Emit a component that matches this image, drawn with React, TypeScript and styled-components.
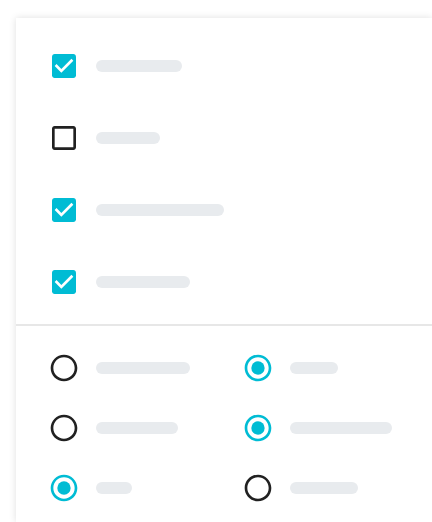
import React from "react";
import styled, { createGlobalStyle } from "styled-components";

const Global = createGlobalStyle`
  html, body { margin: 0; padding: 0; background: #ffffff; overflow: hidden; }
  body { font-family: Roboto, "Liberation Sans", sans-serif; }
`;

const Page = styled.div`
  padding: 18px 0 0 16px;
  width: 432px;
  height: 522px;
  box-sizing: border-box;
  overflow: hidden;
`;

const Card = styled.div`
  width: 100%;
  height: 100%;
  background: #ffffff;
  box-shadow: 0 0 7px rgba(0, 0, 0, 0.13);
`;

const CheckSection = styled.div`
  padding: 12px 0 6px 32px;
  display: flex;
  flex-direction: column;
`;

const CheckRow = styled.div`
  height: 72px;
  display: flex;
  align-items: center;
  gap: 16px;
`;

const Divider = styled.div`
  height: 2px;
  background: #e7e7e7;
`;

const RadioSection = styled.div`
  padding: 12px 0 0 32px;
  display: grid;
  grid-template-columns: 194px 180px;
  grid-auto-rows: 60px;
`;

const RadioRow = styled.div`
  display: flex;
  align-items: center;
  gap: 16px;
`;

const Bar = styled.div<{ $w: number }>`
  width: ${(p) => p.$w}px;
  height: 12px;
  border-radius: 6px;
  background: #e8ebee;
`;

const Icon = styled.svg`
  width: 32px;
  height: 32px;
  flex: none;
  display: block;
`;

const CYAN = "#00bcd4";
const DARK = "#212121";

const Checkbox = ({ checked }: { checked: boolean }) =>
  checked ? (
    <Icon viewBox="0 0 24 24">
      <path
        fill={CYAN}
        d="M19 3H5c-1.11 0-2 .9-2 2v14c0 1.1.89 2 2 2h14c1.11 0 2-.9 2-2V5c0-1.1-.89-2-2-2z"
      />
      <path fill="#fff" d="M10 17l-5-5 1.41-1.41L10 14.17l7.59-7.59L19 8l-9 9z" />
    </Icon>
  ) : (
    <Icon viewBox="0 0 24 24">
      <path
        fill={DARK}
        d="M19 5v14H5V5h14m0-2H5c-1.1 0-2 .9-2 2v14c0 1.1.9 2 2 2h14c1.1 0 2-.9 2-2V5c0-1.1-.9-2-2-2z"
      />
    </Icon>
  );

const Radio = ({ checked }: { checked: boolean }) => (
  <Icon viewBox="0 0 24 24">
    <path
      fill={checked ? CYAN : DARK}
      d="M12 2C6.48 2 2 6.48 2 12s4.48 10 10 10 10-4.48 10-10S17.52 2 12 2zm0 18c-4.42 0-8-3.58-8-8s3.58-8 8-8 8 3.58 8 8-3.58 8-8 8z"
    />
    {checked && <circle cx="12" cy="12" r="5" fill={CYAN} />}
  </Icon>
);

const checks = [
  { checked: true, w: 86 },
  { checked: false, w: 64 },
  { checked: true, w: 128 },
  { checked: true, w: 94 },
];

const radios = [
  { checked: false, w: 94 },
  { checked: true, w: 48 },
  { checked: false, w: 82 },
  { checked: true, w: 102 },
  { checked: true, w: 36 },
  { checked: false, w: 68 },
];

export default function App() {
  return (
    <>
      <Global />
      <Page>
        <Card>
          <CheckSection>
            {checks.map((c, i) => (
              <CheckRow key={i}>
                <Checkbox checked={c.checked} />
                <Bar $w={c.w} />
              </CheckRow>
            ))}
          </CheckSection>
          <Divider />
          <RadioSection>
            {radios.map((r, i) => (
              <RadioRow key={i}>
                <Radio checked={r.checked} />
                <Bar $w={r.w} />
              </RadioRow>
            ))}
          </RadioSection>
        </Card>
      </Page>
    </>
  );
}
